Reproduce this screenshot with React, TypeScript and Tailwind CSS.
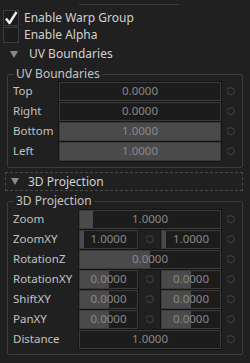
import type { ReactNode } from 'react'

const FONT = { fontFamily: '"Noto Sans", "Open Sans", sans-serif' }

function ResetIcon() {
  return (
    <svg width="10" height="10" viewBox="0 0 10 10" className="shrink-0">
      <path d="M2.2 3.2 A3.4 3.4 0 1 1 1.6 5.6" fill="none" stroke="#3a3a3a" strokeWidth="1.3" />
      <path d="M0.8 1.6 L2.6 3.6 L0.6 4.2 Z" fill="#3a3a3a" />
    </svg>
  )
}

function Field({ value, fill = 0, width }: { value: string; fill?: number; width: string }) {
  return (
    <div className={`relative h-[19px] ${width} border border-[#3b3b3b] bg-[#1c1c1c] shadow-[0_0_0_1px_#141414]`}>
      <div className="absolute inset-y-0 left-0 bg-[#4a4a4a]" style={{ width: `${fill * 100}%` }} />
      <span className="relative flex h-full items-center justify-center text-[11.5px] text-[#888888]">{value}</span>
    </div>
  )
}

function Row({ label, labelW, children }: { label: string; labelW: string; children: ReactNode }) {
  return (
    <div className="flex h-[20px] items-center">
      <span className={`${labelW} shrink-0 text-[11.5px] text-[#c2c2c2]`}>{label}</span>
      {children}
    </div>
  )
}

function Single({ label, labelW, value, fill, w }: { label: string; labelW: string; value: string; fill?: number; w: string }) {
  return (
    <Row label={label} labelW={labelW}>
      <Field value={value} fill={fill} width={w} />
      <span className="flex w-[19px] justify-center"><ResetIcon /></span>
    </Row>
  )
}

function Pair({ label, a, b }: { label: string; a: [string, number]; b: [string, number] }) {
  return (
    <Row label={label} labelW="w-[66px]">
      <Field value={a[0]} fill={a[1]} width="w-[59px]" />
      <span className="flex w-[23px] justify-center"><ResetIcon /></span>
      <Field value={b[0]} fill={b[1]} width="w-[60px]" />
      <span className="flex w-[19px] justify-center"><ResetIcon /></span>
    </Row>
  )
}

function GroupBox({ title, children, className = '' }: { title: string; children: ReactNode; className?: string }) {
  return (
    <div className={`relative ml-[7px] w-[236px] rounded-[2px] border border-[#3c3c3c] ${className}`}>
      <span className="absolute -top-[9px] left-[6px] bg-[#202020] px-[2px] text-[12px] leading-[16px] text-[#c4c4c4]">{title}</span>
      {children}
    </div>
  )
}

function Triangle() {
  return (
    <svg width="8" height="7" viewBox="0 0 8 7" className="shrink-0">
      <path d="M0 0 H8 L4 7 Z" fill="#8a8a8a" />
    </svg>
  )
}

function Check({ checked, label }: { checked?: boolean; label: string }) {
  return (
    <div className="flex h-[16px] items-center">
      <div className="ml-[3px] flex h-[16px] w-[16px] items-center justify-center border border-[#3c3c3c] bg-[#1c1c1c]">
        {checked && (
          <svg width="14" height="14" viewBox="0 0 14 14">
            <path d="M2 7.5 L5.5 12 L12.5 1" fill="none" stroke="#f0f0f0" strokeWidth="2.4" strokeLinejoin="round" />
          </svg>
        )}
      </div>
      <span className="ml-[5px] text-[12px] text-[#d2d2d2]">{label}</span>
    </div>
  )
}

export default function App() {
  return (
    <div className="h-[363px] w-[250px] overflow-hidden bg-[#202020]" style={FONT}>
      <div className="ml-[79px] mt-[4px] h-px w-[100px] bg-[#3a3a3a]" />
      <div className="mt-[5px] flex flex-col gap-[1px]">
        <Check checked label="Enable Warp Group" />
        <Check label="Enable Alpha" />
      </div>
      <div className="mt-[2px] flex h-[18px] items-center pl-[10px]">
        <Triangle />
        <span className="ml-[11px] text-[12px] text-[#d2d2d2]">UV Boundaries</span>
      </div>
      <GroupBox title="UV Boundaries" className="mt-[11px] pb-[6px] pl-[5px] pt-[6px]">
        <Single label="Top" labelW="w-[46px]" value="0.0000" w="w-[162px]" />
        <Single label="Right" labelW="w-[46px]" value="0.0000" w="w-[162px]" />
        <Single label="Bottom" labelW="w-[46px]" value="1.0000" fill={1} w="w-[162px]" />
        <Single label="Left" labelW="w-[46px]" value="1.0000" fill={1} w="w-[162px]" />
      </GroupBox>
      <div className="ml-[5px] mt-[4px] flex h-[19px] w-[238px] items-center border border-dashed border-[#4a4a4a] pl-[5px]">
        <Triangle />
        <span className="ml-[9px] text-[12px] text-[#d2d2d2]">3D Projection</span>
      </div>
      <GroupBox title="3D Projection" className="mt-[10px] pb-[5px] pl-[5px] pt-[7px]">
        <Single label="Zoom" labelW="w-[66px]" value="1.0000" fill={0.09} w="w-[142px]" />
        <Pair label="ZoomXY" a={['1.0000', 0.07]} b={['1.0000', 0.07]} />
        <Single label="RotationZ" labelW="w-[66px]" value="0.0000" fill={0.5} w="w-[142px]" />
        <Pair label="RotationXY" a={['0.0000', 0.5]} b={['0.0000', 0.5]} />
        <Pair label="ShiftXY" a={['0.0000', 0.5]} b={['0.0000', 0.5]} />
        <Pair label="PanXY" a={['0.0000', 0.5]} b={['0.0000', 0.5]} />
        <Single label="Distance" labelW="w-[66px]" value="1.0000" w="w-[142px]" />
      </GroupBox>
    </div>
  )
}
